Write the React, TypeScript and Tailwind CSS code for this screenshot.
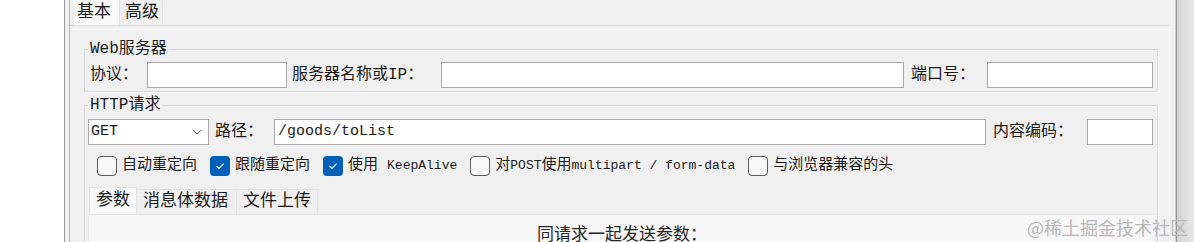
import React from "react";

const F = "font-['Liberation_Mono','Noto_Sans_CJK_SC',monospace] text-[#1a1a1a]";

function Cb({ checked }: { checked?: boolean }) {
  return checked ? (
    <span className="w-[20px] h-[20px] rounded-[4px] bg-[#005fb8] flex items-center justify-center shrink-0">
      <svg width="12" height="12" viewBox="0 0 12 12">
        <path d="M2.6 6.1 L5 8.5 L9.6 3.7" stroke="#ffffff" strokeWidth="1.1" fill="none" />
      </svg>
    </span>
  ) : (
    <span className="w-[20px] h-[20px] rounded-[4px] border border-[#5c5c5c] bg-[#f8f8f8] shrink-0" />
  );
}

function Check({ checked, children }: { checked?: boolean; children: React.ReactNode }) {
  return (
    <div className="flex items-center gap-[5px]">
      <Cb checked={checked} />
      <span className={`${F} text-[15px] leading-[20px] whitespace-nowrap`}>{children}</span>
    </div>
  );
}

function Input({ className, value }: { className: string; value?: string }) {
  return (
    <div className={`${className} h-[26px] bg-white border border-[#a8a8a8] flex items-center pl-[3px]`}>
      {value ? <span className={`${F} text-[15px]`}>{value}</span> : null}
    </div>
  );
}

export default function App() {
  return (
    <div className="w-[1194px] h-[242px] flex bg-white overflow-hidden relative">
      <div className="w-[64px] bg-white" />
      <div className="w-[1px] bg-[#9a9a9a]" />
      <div className="w-[4px] bg-[#f0f0f0]" />
      <div className="w-[1px] bg-[#b8b8b8]" />
      <div className="w-[1100px] bg-[#f0f0f0] flex flex-col">
        {/* top tabs */}
        <div className="h-[25px] flex pl-[4px] items-end">
          <div className={`${F} h-[25px] w-[46px] bg-[#f9f9f9] border-r border-[#e2e2e2] text-[17px] leading-[25px] pl-[3px]`}>
            基本
          </div>
          <div className={`${F} h-[24px] w-[43px] bg-[#f0f0f0] border-r border-[#e2e2e2] text-[17px] leading-[24px] pl-[5px]`}>
            高级
          </div>
        </div>
        {/* panel */}
        <div className="flex-1 border-t border-[#dcdcdc] border-r border-r-[#fbfbfb] shadow-[inset_0_3px_0_#f0f0f0,inset_0_4px_0_#fbfbfb] pl-[14px] pr-[11px] pt-[14px]">
          <fieldset className="border border-[#d8d8d8] shadow-[1px_1px_0_#ffffff]">
            <legend className={`${F} ml-[3px] px-[2px] text-[16px] leading-[18px]`}>Web服务器</legend>
            <div className="flex items-center pl-[5px] pr-[4px] mt-[4px] pb-[3px]">
              <span className={`${F} w-[57px] text-[16px] whitespace-nowrap`}>协议：</span>
              <Input className="w-[140px]" />
              <span className={`${F} ml-[5px] w-[149px] text-[16px] whitespace-nowrap`}>服务器名称或IP：</span>
              <Input className="flex-1" />
              <span className={`${F} ml-[7px] w-[76px] text-[16px] whitespace-nowrap`}>端口号：</span>
              <Input className="w-[166px]" />
            </div>
          </fieldset>
          <fieldset className="mt-[4px] border border-[#d8d8d8] border-b-0 shadow-[1px_0_0_#ffffff] h-[160px]">
            <legend className={`${F} ml-[3px] px-[2px] text-[16px] leading-[18px]`}>HTTP请求</legend>
            <div className="pl-[3px] pr-[2px]">
              <div className="flex items-center mt-[5px] mr-[2px]">
                <div className="w-[121px] h-[26px] bg-white border border-[#a8a8a8] flex items-center justify-between pl-[2px] pr-[6px]">
                  <span className={`${F} text-[15px]`}>GET</span>
                  <svg width="10" height="6" viewBox="0 0 10 6">
                    <path d="M0.8 0.8 L5 5 L9.2 0.8" stroke="#555555" strokeWidth="1" fill="none" />
                  </svg>
                </div>
                <span className={`${F} ml-[6px] w-[59px] text-[16px] whitespace-nowrap`}>路径：</span>
                <Input className="flex-1" value="/goods/toList" />
                <span className={`${F} ml-[7px] w-[94px] text-[16px] whitespace-nowrap`}>内容编码：</span>
                <Input className="w-[66px]" />
              </div>
              <div className="flex items-center mt-[11px] pl-[9px] gap-[13px]">
                <Check>自动重定向</Check>
                <Check checked>跟随重定向</Check>
                <Check checked>
                  使用 <span className="text-[13px]">KeepAlive</span>
                </Check>
                <Check>
                  对<span className="text-[13px]">POST</span>使用<span className="text-[13px]">multipart / form-data</span>
                </Check>
                <Check>与浏览器兼容的头</Check>
              </div>
              <div className="mt-[11px] flex items-end pl-[1px]">
                <div className={`${F} h-[27px] w-[48px] bg-[#f9f9f9] border-l border-t border-r border-[#e4e4e4] text-[17px] leading-[26px] pl-[6px]`}>
                  参数
                </div>
                <div className={`${F} h-[25px] w-[100px] bg-[#f0f0f0] border-t border-r border-[#e4e4e4] text-[17px] leading-[24px] pl-[6px]`}>
                  消息体数据
                </div>
                <div className={`${F} h-[25px] w-[81px] bg-[#f0f0f0] border-t border-r border-[#e4e4e4] text-[17px] leading-[24px] pl-[6px]`}>
                  文件上传
                </div>
              </div>
              <div className="h-[40px] bg-[#f7f7f7] border-l border-t border-[#e4e4e4] flex justify-center pt-[10px]">
                <span className={`${F} text-[17px] leading-[22px] text-[#262626]`}>同请求一起发送参数：</span>
              </div>
            </div>
          </fieldset>
        </div>
      </div>
      <div className="w-[5px] bg-[#f0f0f0]" />
      <div className="w-[1px] bg-[#cfcfcf]" />
      <div className="w-[1px] bg-[#959595]" />
      <div className="w-[17px] bg-gradient-to-r from-[#d2d2d2] to-[#e9e9e9]" />
      <div className="absolute right-[6px] bottom-[4px] font-['Noto_Sans_CJK_SC',sans-serif] text-[18px] leading-[22px] text-[#b9b9b9]">
        @稀土掘金技术社区
      </div>
    </div>
  );
}
